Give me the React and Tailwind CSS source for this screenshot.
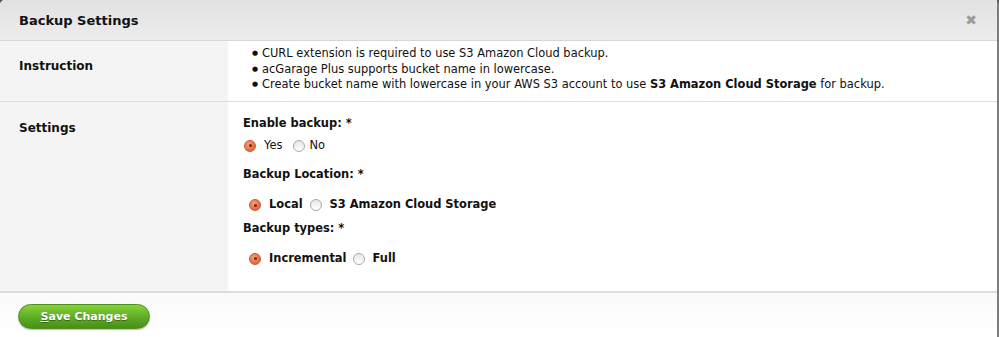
import React from 'react'

function Radio({ checked }) {
  return checked ? (
    <span className="inline-flex items-center justify-center w-[12px] h-[12px] rounded-full border border-[#c45a34] bg-[radial-gradient(circle_at_40%_35%,#f6a07a,#e4683c_70%)] shrink-0">
      <span className="w-[3px] h-[3px] rounded-full bg-[#6b2a14]" />
    </span>
  ) : (
    <span className="inline-block w-[12px] h-[12px] rounded-full border border-[#a9a9a9] bg-[linear-gradient(#e6e6e6,#ffffff)] shrink-0" />
  )
}

function Option({ checked, label, bold, gap = 'ml-[8px]' }) {
  return (
    <span className="inline-flex items-center">
      <Radio checked={checked} />
      <span className={`${gap} ${bold ? 'font-bold' : ''}`}>{label}</span>
    </span>
  )
}

export default function App() {
  return (
    <div className="w-[999px] h-[337px] bg-[#555] text-[11.45px] leading-[15.5px] text-[#111] overflow-hidden" style={{ fontFamily: '"DejaVu Sans", Verdana, sans-serif' }}>
      <div className="h-full bg-white rounded-t-[5px] border-r-2 border-[#7d7d7d] flex flex-col">
        <div className="h-[41px] shrink-0 flex items-center justify-between pl-[19px] pr-[20px] pt-[1px] rounded-tl-[5px] bg-[linear-gradient(#e2e2e2,#ececec)] border-b border-[#d6d6d6]">
          <span className="font-bold text-[13px]">Backup Settings</span>
          <span className="text-[#9a9a9a] text-[14px] font-bold">✖</span>
        </div>

        <div className="flex border-b border-[#dcdcdc] h-[61px] shrink-0">
          <div className="w-[228px] shrink-0 bg-[#f4f4f4] pl-[19px] pt-[18px] font-bold text-[12px]">Instruction</div>
          <ul className="pl-[24px] pt-[5px]">
            <li className="flex items-center"><span className="w-[10px] text-[7px]">●</span>CURL extension is required to use S3 Amazon Cloud backup.</li>
            <li className="flex items-center"><span className="w-[10px] text-[7px]">●</span>acGarage Plus supports bucket name in lowercase.</li>
            <li className="flex items-center"><span className="w-[10px] text-[7px]">●</span><span>Create bucket name with lowercase in your AWS S3 account to use <b>S3 Amazon Cloud Storage</b> for backup.</span></li>
          </ul>
        </div>

        <div className="flex border-b-2 border-[#dcdcdc] h-[191px] shrink-0">
          <div className="w-[228px] shrink-0 bg-[#f4f4f4] pl-[19px] pt-[19px] font-bold text-[12px]">Settings</div>
          <div className="pl-[15px] pt-[14px] flex flex-col">
            <div className="font-bold">Enable backup: *</div>
            <div className="flex items-center h-[16px] mt-[6px] pl-[1px] gap-[11px]">
              <Option checked label="Yes" gap="ml-[8px]" />
              <Option label="No" gap="ml-[4px]" />
            </div>
            <div className="font-bold mt-[13px]">Backup Location: *</div>
            <div className="flex items-center h-[16px] mt-[15px] pl-[6px] gap-[7px]">
              <Option checked bold label="Local" />
              <Option bold label="S3 Amazon Cloud Storage" />
            </div>
            <div className="font-bold mt-[8px]">Backup types: *</div>
            <div className="flex items-center h-[16px] mt-[14px] pl-[6px] gap-[6px]">
              <Option checked bold label="Incremental" />
              <Option bold label="Full" />
            </div>
          </div>
        </div>

        <div className="flex-1 bg-[linear-gradient(#fafafa,#ffffff)] pl-[18px] pt-[11px]">
          <button className="w-[132px] h-[25px] rounded-full border border-[#4d8f1c] bg-[linear-gradient(#86d23a,#5aa823_60%,#4a8e1a)] text-white font-bold text-[11px] [text-shadow:0_1px_0_#3a6e12] shadow-[0_1px_1px_rgba(0,0,0,0.25)]">
            <span className="underline">S</span>ave Changes
          </button>
        </div>
      </div>
    </div>
  )
}
